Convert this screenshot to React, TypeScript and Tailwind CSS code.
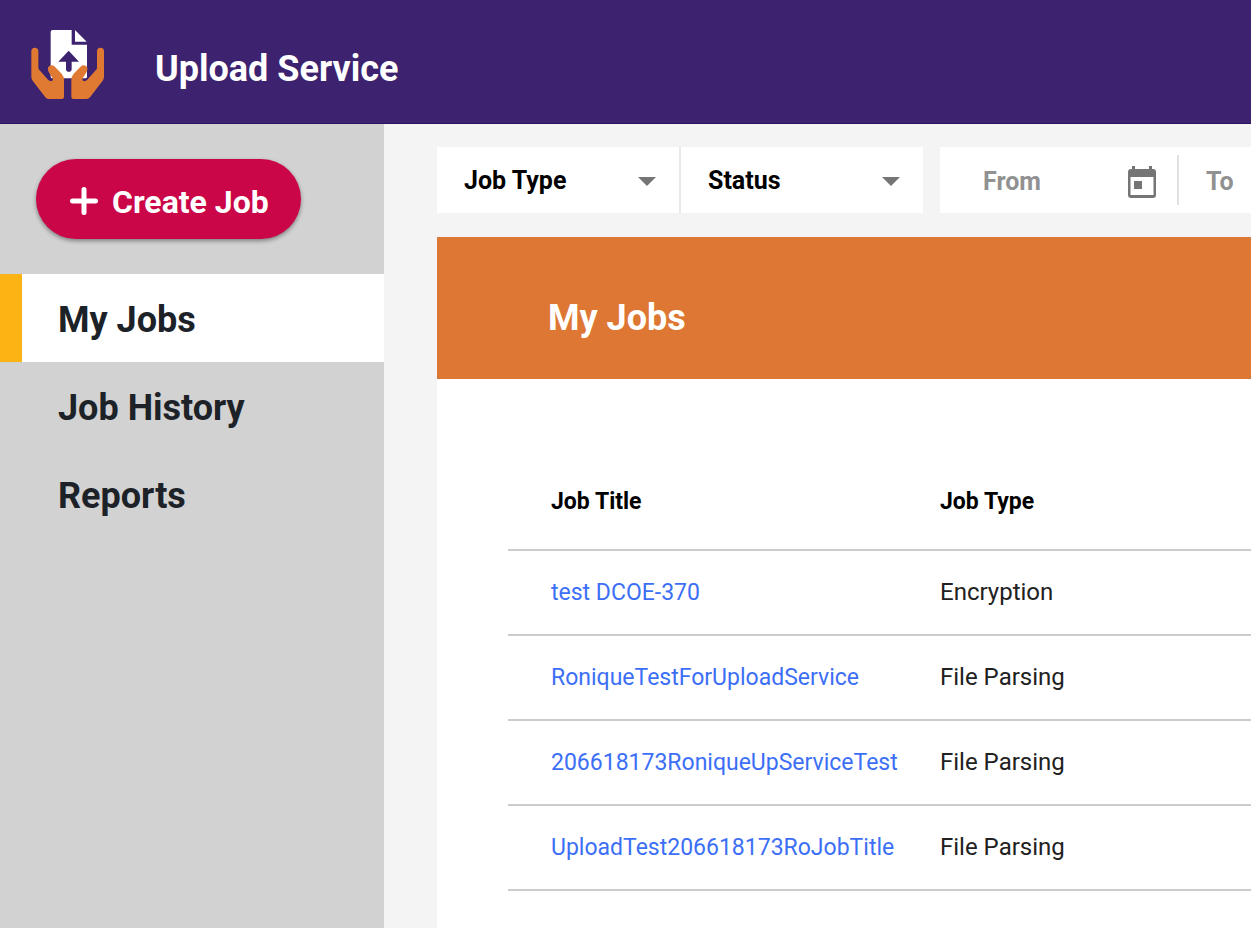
import React from 'react';

const jobs = [
  { title: 'test DCOE-370', type: 'Encryption' },
  { title: 'RoniqueTestForUploadService', type: 'File Parsing' },
  { title: '206618173RoniqueUpServiceTest', type: 'File Parsing' },
  { title: 'UploadTest206618173RoJobTitle', type: 'File Parsing' },
];

function Logo() {
  const hand =
    'M34 94 A10.5 10.5 0 0 1 55 94 V143 Q55 148 59 151 L84 179 Q90 185 97 182 Q101 178 97 173 L86 156 Q81 145 87 139 Q95 133 103 139 L125 161 Q132 169 132 180 V231 Q132 237 126 237 H86 Q80 237 76 232 L38 182 Q34 177 34 170 Z';
  return (
    <svg viewBox="30 27 225 213" className="h-[71px] w-[75px] shrink-0" role="img" aria-label="Upload Service logo">
      <path d="M98 30 H155 V74 H201 V170 Q201 175 196 175 H98 Q92 175 92 170 V36 Q92 30 98 30 Z" fill="#fff" />
      <path d="M165 30 L200 65 H165 Z" fill="#fff" />
      <path d="M146 92 L177 125 H155 V147 A8.5 8.5 0 0 1 138 147 V125 H115 Z" fill="#3d226f" />
      <path d={hand} fill="#e07a32" />
      <path d={hand} fill="#e07a32" transform="translate(286 0) scale(-1 1)" />
    </svg>
  );
}

function FilterSelect({ label }: { label: string }) {
  return (
    <div className="relative h-full w-[242px] shrink-0 bg-white">
      <select
        aria-label={label}
        className="h-full w-full appearance-none bg-transparent pt-[2px] pr-12 pl-[27px] text-[25px] font-bold text-black"
      >
        <option>{label}</option>
      </select>
      <svg viewBox="0 0 18 9" className="pointer-events-none absolute top-[30px] right-[23px] h-[9px] w-[18px]" aria-hidden="true">
        <path d="M0 0H18L9 9Z" fill="#757575" />
      </svg>
    </div>
  );
}

function CalendarIcon() {
  return (
    <svg viewBox="0 0 30 33" className="h-[33px] w-[30px]" aria-hidden="true">
      <path
        fillRule="evenodd"
        fill="#757575"
        d="M5 0H8V3H22V0H25V3H26A3 3 0 0 1 29 6V29A3 3 0 0 1 26 32H4A3 3 0 0 1 1 29V6A3 3 0 0 1 4 3H5ZM3.500 11V29H26.500V11ZM7 15H15V23H7Z"
      />
    </svg>
  );
}

function DateField({ label }: { label: string }) {
  return (
    <div className="flex h-[50px] items-center">
      <input
        type="text"
        aria-label={label}
        placeholder={label}
        className="h-full w-36 bg-transparent pt-[2px] text-[25px] font-bold text-black placeholder:text-[#919191]"
      />
      <button type="button" aria-label={`Choose ${label} date`} className="pt-1">
        <CalendarIcon />
      </button>
    </div>
  );
}

function NavItem({ label, active = false }: { label: string; active?: boolean }) {
  return (
    <li>
      <a
        href="#"
        aria-current={active ? 'page' : undefined}
        className={
          active
            ? 'flex h-[88px] items-center border-l-[22px] border-[#fcb414] bg-white pt-1 pl-9 text-4xl font-bold text-[#1c2227]'
            : 'flex h-[88px] items-center border-l-[22px] border-transparent pt-1 pl-9 text-4xl font-bold text-[#1c2227]'
        }
      >
        {label}
      </a>
    </li>
  );
}

export default function App() {
  return (
    <div className="flex min-h-screen flex-col overflow-hidden bg-[#f4f4f4] font-['Roboto',sans-serif]">
      <header className="flex h-[124px] items-center border-b border-[#2f1465] bg-[#3d226f] pt-[6px] pl-[30px]">
        <Logo />
        <h1 className="pt-2 pl-[50px] text-4xl font-bold text-white">Upload Service</h1>
      </header>

      <div className="flex flex-1">
        <aside className="w-96 shrink-0 bg-[#d2d2d2]">
          <div className="px-9 py-[35px]">
            <button
              type="button"
              className="flex h-20 items-center rounded-full bg-[#cb0648] pt-1 pr-8 pl-[34px] text-[32px] font-bold text-white shadow-[0_2px_4px_rgba(0,0,0,0.4)]"
            >
              <svg viewBox="0 0 28 28" className="mr-[14px] h-7 w-7" aria-hidden="true">
                <path d="M14 2.5V25.5M2.5 14H25.5" stroke="#fff" strokeWidth="5" strokeLinecap="round" />
              </svg>
              <span className="pt-[2px]">Create Job</span>
            </button>
          </div>
          <nav aria-label="Jobs">
            <ul>
              <NavItem label="My Jobs" active />
              <NavItem label="Job History" />
              <NavItem label="Reports" />
            </ul>
          </nav>
        </aside>

        <main className="flex min-w-0 flex-1 flex-col overflow-hidden pt-[23px] pl-[53px]">
          <div className="flex h-[66px] gap-[17px]">
            <div className="flex shrink-0 items-center gap-[2px] bg-[#e8e8e8]">
              <FilterSelect label="Job Type" />
              <FilterSelect label="Status" />
            </div>
            <div className="flex flex-1 items-center bg-white pl-[43px]">
              <DateField label="From" />
              <div className="ml-5 h-[50px] border-l-2 border-[#e0e0e0] pl-[27px]">
                <DateField label="To" />
              </div>
            </div>
          </div>

          <section className="mt-6 flex flex-1 flex-col bg-white">
            <h2 className="flex h-[142px] items-center bg-[#de7733] pt-5 pl-[111px] text-4xl font-bold text-white">My Jobs</h2>
            <div className="pt-[73px] pl-[71px]">
              <table className="w-full table-fixed border-collapse text-left">
                <thead>
                  <tr className="h-[98px] border-b-2 border-[#cccccc] text-[23px]">
                    <th className="w-[389px] pt-1 pl-[43px] font-bold text-black">Job Title</th>
                    <th className="pt-1 pl-[43px] font-bold text-black">Job Type</th>
                  </tr>
                </thead>
                <tbody>
                  {jobs.map((job) => (
                    <tr key={job.title} className="h-[85px] border-b-2 border-[#cccccc]">
                      <td className="pt-[2px] pl-[43px] text-[23px] whitespace-nowrap">
                        <a href="#" className="text-[#3c6ff6]">{job.title}</a>
                      </td>
                      <td className="pb-[2px] pl-[43px] text-2xl text-[#212121]">{job.type}</td>
                    </tr>
                  ))}
                </tbody>
              </table>
            </div>
          </section>
        </main>
      </div>
    </div>
  );
}
